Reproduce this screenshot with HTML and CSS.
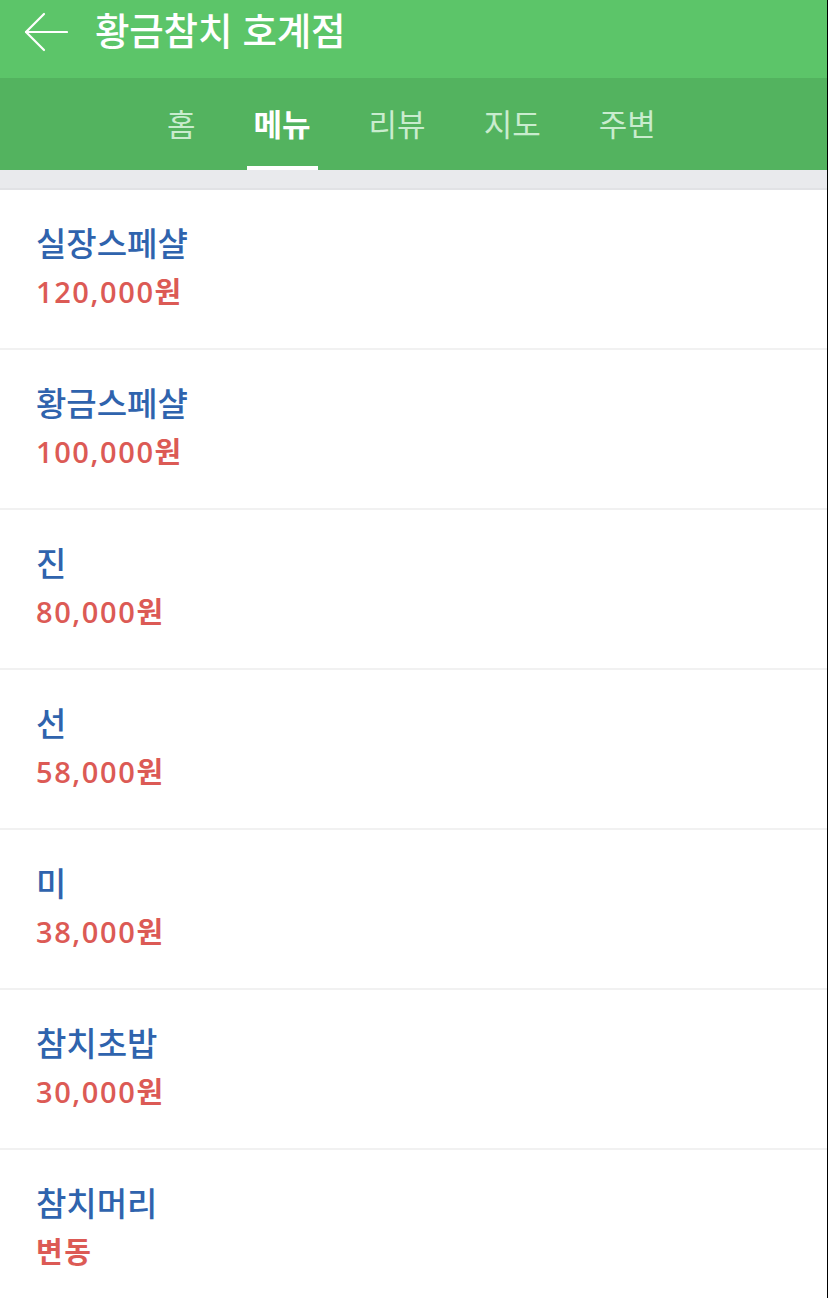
FILE: index.html
```html
<!DOCTYPE html>
<html lang="ko">
<head>
  <meta charset="UTF-8" />
  <meta name="viewport" content="width=device-width, initial-scale=1" />
  <title>황금참치 호계점 - 메뉴</title>
  <link rel="stylesheet" href="styles.css">
</head>
<body>
  <div class="page">
    <header class="topbar">
      <a class="back" href="#" aria-label="뒤로">
        <svg width="44" height="40" viewBox="0 0 44 40" fill="none" stroke="#fff" stroke-width="2.2" stroke-linecap="round" stroke-linejoin="round">
          <path d="M2 20 H43" />
          <path d="M20 2 L2 20 L20 38" />
        </svg>
      </a>
      <h1 class="title">황금참치 호계점</h1>
    </header>

    <nav class="tabs">
      <a class="tab" href="#">홈</a>
      <a class="tab active" href="#">메뉴</a>
      <a class="tab" href="#">리뷰</a>
      <a class="tab" href="#">지도</a>
      <a class="tab" href="#">주변</a>
    </nav>

    <div class="gap"></div>

    <ul class="menu">
      <li class="item"><div class="name">실장스페샬</div><div class="price">120,000원</div></li>
      <li class="item"><div class="name">황금스페샬</div><div class="price">100,000원</div></li>
      <li class="item"><div class="name">진</div><div class="price">80,000원</div></li>
      <li class="item"><div class="name">선</div><div class="price">58,000원</div></li>
      <li class="item"><div class="name">미</div><div class="price">38,000원</div></li>
      <li class="item"><div class="name">참치초밥</div><div class="price">30,000원</div></li>
      <li class="item"><div class="name">참치머리</div><div class="price">변동</div></li>
    </ul>
  </div>
</body>
</html>
```

FILE: styles.css
```css
html { background: #000; }
body {
  margin: 0;
  font-family: "Noto Sans CJK KR", "Noto Sans", sans-serif;
}
.page {
  width: 827px;
  height: 1298px;
  overflow: hidden;
  background: #fff;
}
.topbar {
  height: 78px;
  background: #5cc569;
  display: flex;
  align-items: center;
  padding-left: 24px;
}
.back {
  display: flex;
  width: 44px;
  height: 40px;
  margin-top: -14px;
}
.title {
  margin: -22px 0 0 27px;
  color: #fff;
  font-size: 37.5px;
  font-weight: 500;
  letter-spacing: -0.2px;
}
.tabs {
  height: 92px;
  background: #53b35f;
  display: flex;
  gap: 44px;
  padding-left: 160px;
}
.tab {
  display: flex;
  align-items: center;
  padding: 0 7px 4px;
  color: #c9ecce;
  font-size: 31px;
  text-decoration: none;
  position: relative;
}
.tab.active {
  color: #fff;
  font-weight: 700;
}
.tab.active::after {
  content: "";
  position: absolute;
  left: 0;
  right: 0;
  bottom: 0;
  height: 4px;
  background: #fff;
}
.gap {
  height: 18px;
  background: #e9eaed;
  border-bottom: 2px solid #e1e2e5;
}
.menu {
  list-style: none;
  margin: 0;
  padding: 0;
}
.item {
  height: 160px;
  box-sizing: border-box;
  padding: 27px 36px 31px;
  border-bottom: 2px solid #f1f1f1;
}
.name {
  color: #2f63ad;
  font-size: 33px;
  line-height: 50px;
  font-weight: 500;
}
.price {
  color: #dc5a55;
  font-family: "Open Sans", "Noto Sans CJK KR", sans-serif;
  font-size: 29px;
  line-height: 50px;
  font-weight: 600;
  letter-spacing: 1.6px;
}
```
